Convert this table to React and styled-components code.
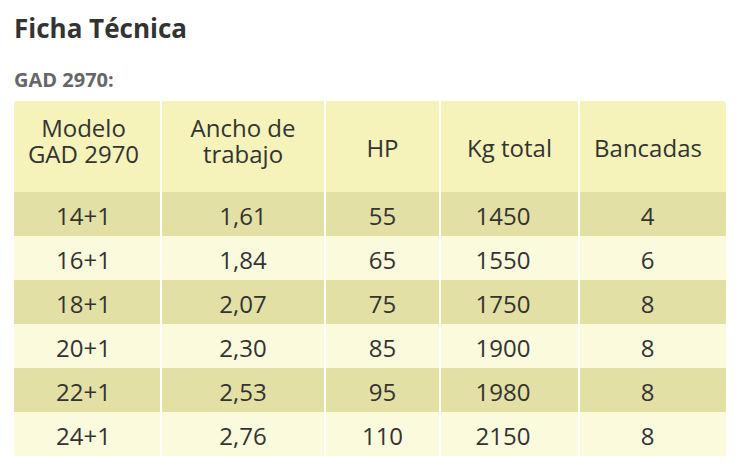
import React from "react";
import styled, { createGlobalStyle } from "styled-components";

const GlobalStyle = createGlobalStyle`
    body {
        margin: 0;
        background: #fff;
        font-family: "Open Sans", "Noto Sans", sans-serif;
        color: #333;
    }
`;

const Wrapper = styled.div`
    padding: 10px 15px 0 14px;
`;

const Title = styled.h2`
    margin: 0;
    font-size: 26px;
    font-weight: 700;
    line-height: 36px;
    color: #333;
`;

const SubTitle = styled.h4`
    margin: 22px 0 9px;
    font-size: 20px;
    font-weight: 700;
    line-height: 24px;
    color: #666;
`;

const Table = styled.table`
    width: 712px;
    border-collapse: separate;
    border-spacing: 0;
    table-layout: fixed;
    font-size: 24px;
`;

const HeadRow = styled.tr`
    height: 91px;
`;

const HeadCell = styled.th`
    width: ${(props) => props.w}px;
    padding: 3px ${(props) => 4 + props.shift}px ${(props) => (props.multi ? 15 : 0)}px 4px;
    box-sizing: border-box;
    background-color: #f5f3b9;
    font-weight: 400;
    line-height: 26px;
    text-align: center;
    vertical-align: middle;
    border-right: 2px solid #fff;
    &:first-child {
        border-top-left-radius: 3px;
    }
    &:last-child {
        border-right: none;
        border-top-right-radius: 3px;
    }
`;

const Row = styled.tr`
    height: 44px;
    background-color: ${(props) => (props.dark ? "#e2e0a4" : "#fbfadd")};
`;

const Cell = styled.td`
    padding: 4px ${(props) => props.shift}px 0 0;
    text-align: center;
    vertical-align: middle;
    line-height: 28px;
    border-right: 2px solid #fff;
    &:last-child {
        border-right: none;
    }
`;

// shift = extra right padding, the source table is not centred exactly
const columns = [
    { label: ["Modelo", "GAD 2970"], w: 148, head: 7, body: 7 },
    { label: ["Ancho de", "trabajo"], w: 164, head: 0, body: 0 },
    { label: ["HP"], w: 115, head: 0, body: 0 },
    { label: ["Kg total"], w: 139, head: 0, body: 13 },
    { label: ["Bancadas"], w: 146, head: 10, body: 11 },
];

const rows = [
    ["14+1", "1,61", "55", "1450", "4"],
    ["16+1", "1,84", "65", "1550", "6"],
    ["18+1", "2,07", "75", "1750", "8"],
    ["20+1", "2,30", "85", "1900", "8"],
    ["22+1", "2,53", "95", "1980", "8"],
    ["24+1", "2,76", "110", "2150", "8"],
];

const App = () => {
    return (
        <Wrapper>
            <GlobalStyle />
            <Title>Ficha Técnica</Title>
            <SubTitle>GAD 2970:</SubTitle>
            <Table>
                <thead>
                    <HeadRow>
                        {columns.map((col) => (
                            <HeadCell
                                key={col.label[0]}
                                w={col.w}
                                shift={col.head}
                                multi={col.label.length > 1}
                            >
                                {col.label.map((line, i) => (
                                    <React.Fragment key={line}>
                                        {i > 0 && <br />}
                                        {line}
                                    </React.Fragment>
                                ))}
                            </HeadCell>
                        ))}
                    </HeadRow>
                </thead>
                <tbody>
                    {rows.map((row, i) => (
                        <Row key={row[0]} dark={i % 2 === 0}>
                            {row.map((value, j) => (
                                <Cell key={j} shift={columns[j].body}>
                                    {value}
                                </Cell>
                            ))}
                        </Row>
                    ))}
                </tbody>
            </Table>
        </Wrapper>
    );
};

export default App;
